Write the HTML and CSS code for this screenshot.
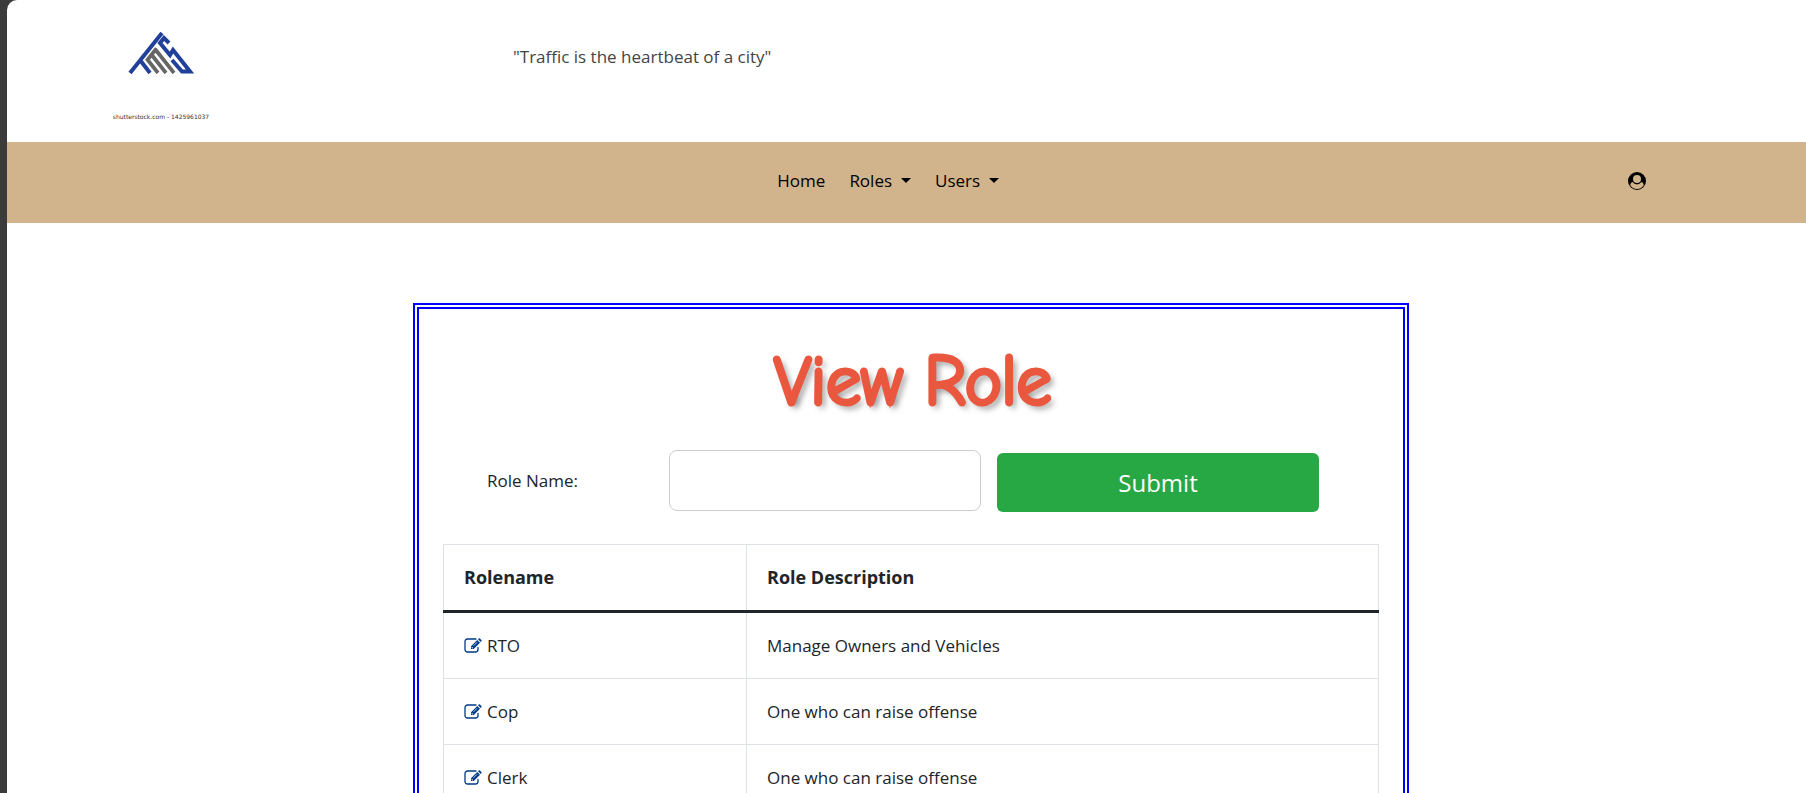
FILE: index.html
```html
<!DOCTYPE html>
<html lang="en">
<head>
<meta charset="utf-8">
<title>View Role</title>
<meta name="viewport" content="width=device-width, initial-scale=1">
<link rel="stylesheet" href="styles.css">
</head>
<body>
<svg class="sprite" aria-hidden="true">
  <symbol id="edit" viewBox="0 0 18 15">
    <path d="M12 1H3.500A2.500 2.500 0 0 0 1 3.500v8A2.500 2.500 0 0 0 3.500 14h8a2.500 2.500 0 0 0 2.500-2.500V9.500" fill="none" stroke="currentColor" stroke-width="1.300" stroke-linecap="round"/>
    <path d="M7 8.300 13.300 2l2.700 2.700L9.700 11H7zM14 1.300l.7-.7q.6-.5 1.200 0l1.500 1.500q.5.600 0 1.200l-.7.700z" fill="currentColor"/>
    <path d="M8 9v1h1M9.500 7.800l3.500-3.500" fill="none" stroke="#fff" stroke-width=".7"/>
  </symbol>
</svg>
<div class="page">
  <header class="header">
    <figure class="logo">
      <svg viewBox="0 0 66 42" role="img" aria-label="TMS">
        <g fill="none" stroke-width="4" stroke="#21409a">
          <path d="M34 1 2 41"/>
          <path d="M12 28 22 41"/>
          <path d="M41 11 36 6 32 11 42 23 45 18 62 39.500H54L44 28"/>
        </g>
        <g fill="none" stroke-width="3.700" stroke="#666">
          <path d="M19 27 30 41M23 22 38 41M27 17 46 41M18.500 29 28.500 16.500"/>
        </g>
      </svg>
      <figcaption>shutterstock.com - 1425961037</figcaption>
    </figure>
    <p class="quote">"Traffic is the heartbeat of a city"</p>
  </header>
  <nav class="nav">
    <ul class="menu">
      <li><a href="#">Home</a></li>
      <li><a href="#" class="drop">Roles</a></li>
      <li><a href="#" class="drop">Users</a></li>
    </ul>
    <a href="#" class="account" aria-label="Account">
      <svg viewBox="0 0 18 18"><circle cx="9" cy="9" r="9"/><g fill="#d2b48c"><path d="M4.600 10Q6 12.400 9 12.400t4.400-2.400Q16 11 15.600 13.500 13 17 9 17T2.400 13.500Q2 11 4.600 10z"/><circle cx="9" cy="7" r="4"/></g></svg>
    </a>
  </nav>
  <main class="main">
    <section class="card">
      <h1 class="title">View Role</h1>
      <form class="search">
        <label for="role">Role Name:</label>
        <input id="role" type="text">
        <button type="submit">Submit</button>
      </form>
      <table class="roles">
        <thead><tr><th>Rolename</th><th>Role Description</th></tr></thead>
        <tbody>
          <tr><td><a href="#" aria-label="Edit RTO"><svg class="edit"><use href="#edit"/></svg></a>RTO</td><td>Manage Owners and Vehicles</td></tr>
          <tr><td><a href="#" aria-label="Edit Cop"><svg class="edit"><use href="#edit"/></svg></a>Cop</td><td>One who can raise offense</td></tr>
          <tr><td><a href="#" aria-label="Edit Clerk"><svg class="edit"><use href="#edit"/></svg></a>Clerk</td><td>One who can raise offense</td></tr>
        </tbody>
      </table>
    </section>
  </main>
</div>
</body>
</html>
```
FILE: styles.css
```css
* { box-sizing: border-box; }
html { background: #3b3b3b; }
body {
  margin: 0;
  padding-left: 7px;
  height: 100vh;
  overflow: hidden;
  color: #212529;
  font: 17px/26px "Open Sans", "Noto Sans", sans-serif;
}
.sprite { position: absolute; width: 0; height: 0; }
.page { min-height: 100vh; background: #fff; border-top-left-radius: 10px; }
.header { display: flex; height: 142px; padding-left: 94px; }
.logo { width: 120px; margin: 0; padding-top: 32px; text-align: center; }
.logo svg { display: block; width: 66px; height: 42px; margin: 0 auto 38px; }
.logo figcaption { font: 6px/10px "DejaVu Sans", sans-serif; white-space: nowrap; color: #333; }
.quote { margin: 44px 0 0 292px; color: #444; }
.nav {
  display: flex;
  align-items: center;
  height: 81px;
  background: #d2b48c;
  padding: 0 160px 4px 0;
}
.menu { display: flex; gap: 24px; margin: 0; padding: 0 0 0 47%; list-style: none; }
.menu a { color: #000; text-decoration: none; }
.drop::after {
  content: "";
  display: inline-block;
  margin-left: 9px;
  vertical-align: 4px;
  border: 5px solid transparent;
  border-top-color: #000;
  border-bottom: 0;
}
.account { margin-left: auto; }
.account svg { display: block; width: 18px; height: 18px; }
.main { padding: 80px 397px 0 406px; }
.card { border: 6px double #00f; padding: 24px 24px 60px; }
.title {
  margin: 0 0 24px;
  padding: 6px 0 0 4px;
  text-align: center;
  font: 300 68px/86px "Comic Sans MS", "Comic Neue", Lato, sans-serif;
  color: #e9573f;
  -webkit-text-stroke: 5px #e9573f;
  text-shadow: 4px 4px 6px rgba(0, 0, 0, .7);
}
.search {
  display: grid;
  grid-template-columns: 166px 312px 322px;
  column-gap: 16px;
  align-items: center;
  padding: 0 44px;
  margin-bottom: 32px;
}
.search input { height: 61px; border: 1px solid #ccc; border-radius: 8px; background: #fff; padding: 0 16px; font: inherit; }
.search button {
  height: 59px;
  margin-top: 4px;
  border: 0;
  border-radius: 6px;
  background: #28a745;
  color: #fff;
  font: 24px/36px "Open Sans", "Noto Sans", sans-serif;
}
.roles { width: 100%; border-collapse: collapse; table-layout: fixed; }
.roles th, .roles td { border: 1px solid #dee2e6; padding: 20px; height: 66px; line-height: 25px; text-align: left; }
.roles th { border-bottom: 3px solid #212529; font-size: 18px; }
.roles th:first-child { width: 303px; }
.roles a { color: #003b88; }
.edit { width: 18px; height: 15px; margin-right: 5px; vertical-align: -1px; }
```
